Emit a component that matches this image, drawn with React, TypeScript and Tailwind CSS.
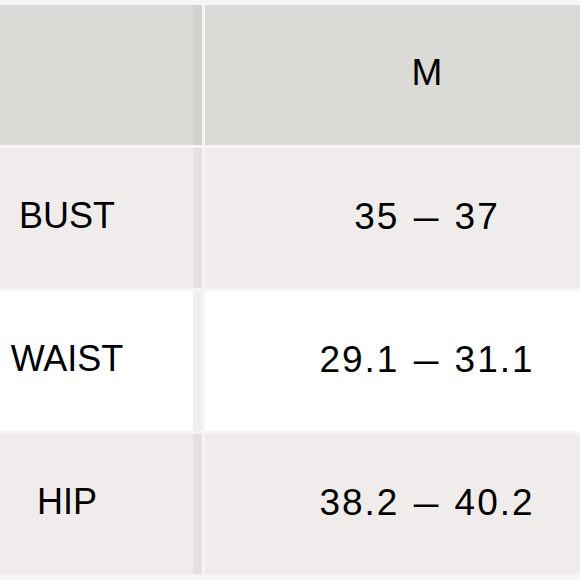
import React from 'react';

interface SizeRow {
  label: string;
  from: string;
  to: string;
  bg: string;
  edge: string;
}

const rows: SizeRow[] = [
  { label: 'BUST', from: '35', to: '37', bg: 'bg-[#efeceb]', edge: 'border-[#e4e1e0]' },
  { label: 'WAIST', from: '29.1', to: '31.1', bg: 'bg-white', edge: 'border-[#f1efee]' },
  { label: 'HIP', from: '38.2', to: '40.2', bg: 'bg-[#efeceb]', edge: 'border-[#e4e1e0]' },
];

const App: React.FC = () => {
  return (
    <div
      className="w-[580px] h-[580px] overflow-hidden bg-[#f7f5f4] pt-[5px] flex flex-col gap-[3px] text-black"
      style={{ fontFamily: '"Liberation Sans", Arial, sans-serif' }}
    >
      {/* header */}
      <div className="flex gap-[3px] h-[140px] shrink-0">
        <div className="w-[202px] shrink-0 bg-[#dbdad6] border-r-[9px] border-[#d2d1cd]" />
        <div className="w-[444px] shrink-0 bg-[#dbdad6] flex items-center justify-center pb-[5px]">
          <span className="text-[37px] leading-none">M</span>
        </div>
      </div>

      {rows.map((row) => (
        <div key={row.label} className="flex gap-[3px] h-[140px] shrink-0">
          <div
            className={`w-[202px] shrink-0 ${row.bg} border-r-[9px] ${row.edge} pr-[59px] pb-[4px] flex items-center justify-center`}
          >
            <span className="text-[36px] leading-none">{row.label}</span>
          </div>
          <div className={`w-[444px] shrink-0 ${row.bg} pb-[4px] flex items-center justify-center`}>
            <span className="text-[37px] leading-none tracking-[2px] whitespace-pre">
              {row.from}{' '}
              <span className="inline-block mx-[4px] scale-x-[1.2]">–</span>{' '}
              {row.to}
            </span>
          </div>
        </div>
      ))}
    </div>
  );
};

export default App;
